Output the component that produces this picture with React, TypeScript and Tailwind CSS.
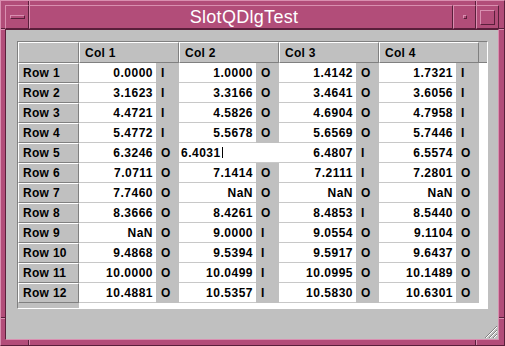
import React from "react";

type Cell = [string, string];

const rows: (Cell | null)[][] = [
  [["0.0000", "I"], ["1.0000", "O"], ["1.4142", "O"], ["1.7321", "I"]],
  [["3.1623", "I"], ["3.3166", "O"], ["3.4641", "O"], ["3.6056", "I"]],
  [["4.4721", "I"], ["4.5826", "O"], ["4.6904", "O"], ["4.7958", "I"]],
  [["5.4772", "I"], ["5.5678", "O"], ["5.6569", "O"], ["5.7446", "I"]],
  [["6.3246", "O"], null, ["6.4807", "I"], ["6.5574", "O"]],
  [["7.0711", "O"], ["7.1414", "O"], ["7.2111", "I"], ["7.2801", "O"]],
  [["7.7460", "O"], ["NaN", "O"], ["NaN", "O"], ["NaN", "O"]],
  [["8.3666", "O"], ["8.4261", "O"], ["8.4853", "I"], ["8.5440", "O"]],
  [["NaN", "O"], ["9.0000", "I"], ["9.0554", "O"], ["9.1104", "O"]],
  [["9.4868", "O"], ["9.5394", "I"], ["9.5917", "O"], ["9.6437", "O"]],
  [["10.0000", "O"], ["10.0499", "I"], ["10.0995", "O"], ["10.1489", "O"]],
  [["10.4881", "O"], ["10.5357", "I"], ["10.5830", "O"], ["10.6301", "O"]],
];

const raisedPink =
  "border-t border-l border-b border-r border-t-[#d98fb0] border-l-[#d98fb0] border-b-[#5a1f3b] border-r-[#5a1f3b]";

function HeaderCell({ label, w }: { label: string; w: string }) {
  return (
    <div
      className={`${w} h-[21px] shrink-0 bg-[#c0c0c0] border-t border-l border-t-white border-l-white border-b border-r border-b-[#808080] border-r-[#808080] pl-[5px] flex items-center text-[12px] font-bold tracking-[0.3px] text-black leading-none`}
    >
      {label}
    </div>
  );
}

export default function App() {
  return (
    <div className="relative w-[505px] h-[346px] overflow-hidden bg-[#b24d79] border-t border-l border-t-[#d98fb0] border-l-[#d98fb0] border-b border-r border-b-[#5a1f3b] border-r-[#5a1f3b] pt-[4px] pl-[4px] pr-[5px] pb-[5px] flex flex-col font-['Liberation_Sans',Arial,sans-serif]">
      {/* Frame resize marks */}
      <div className="absolute left-[27px] top-0 w-[1px] h-[4px] bg-[#5a1f3b]" />
      <div className="absolute left-[28px] top-0 w-[1px] h-[4px] bg-[#d98fb0]" />
      <div className="absolute left-[474px] top-0 w-[1px] h-[4px] bg-[#5a1f3b]" />
      <div className="absolute left-[475px] top-0 w-[1px] h-[4px] bg-[#d98fb0]" />
      <div className="absolute left-[27px] bottom-0 w-[1px] h-[5px] bg-[#5a1f3b]" />
      <div className="absolute left-[28px] bottom-0 w-[1px] h-[5px] bg-[#d98fb0]" />
      <div className="absolute left-[474px] bottom-0 w-[1px] h-[5px] bg-[#5a1f3b]" />
      <div className="absolute left-[475px] bottom-0 w-[1px] h-[5px] bg-[#d98fb0]" />
      <div className="absolute left-0 top-[27px] w-[4px] h-[1px] bg-[#5a1f3b]" />
      <div className="absolute left-0 top-[28px] w-[4px] h-[1px] bg-[#d98fb0]" />
      <div className="absolute left-0 top-[316px] w-[4px] h-[1px] bg-[#5a1f3b]" />
      <div className="absolute left-0 top-[317px] w-[4px] h-[1px] bg-[#d98fb0]" />
      <div className="absolute right-0 top-[27px] w-[5px] h-[1px] bg-[#5a1f3b]" />
      <div className="absolute right-0 top-[28px] w-[5px] h-[1px] bg-[#d98fb0]" />
      <div className="absolute right-0 top-[316px] w-[5px] h-[1px] bg-[#5a1f3b]" />
      <div className="absolute right-0 top-[317px] w-[5px] h-[1px] bg-[#d98fb0]" />

      {/* Title bar */}
      <div className="flex h-[24px] shrink-0">
        <div className={`w-[24px] h-full ${raisedPink} flex items-center justify-center`}>
          <div className={`w-[15px] h-[4px] ${raisedPink}`} />
        </div>
        <div className={`w-[424px] h-full ${raisedPink} flex items-center justify-center pl-[6px] text-white text-[18px] tracking-[0.3px] font-normal leading-none`}>
          SlotQDlgTest
        </div>
        <div className={`w-[23px] h-full ${raisedPink} flex items-center justify-center`}>
          <div className={`w-[4px] h-[4px] ${raisedPink}`} />
        </div>
        <div className={`w-[23px] h-full ${raisedPink} flex items-center justify-center`}>
          <div className={`w-[15px] h-[15px] ${raisedPink}`} />
        </div>
      </div>

      {/* Content */}
      <div className="relative flex-1 bg-[#c0c0c0] border-t border-l border-t-[#5a1f3b] border-l-[#5a1f3b] border-b border-r border-b-[#d98fb0] border-r-[#d98fb0] pt-[11px] pl-[11px]">
        <div className="w-[471px] h-[268px] border-t border-l border-t-[#808080] border-l-[#808080] border-b border-r border-b-white border-r-white flex flex-col overflow-hidden">
          {/* header row */}
          <div className="flex shrink-0">
            <HeaderCell label="" w="w-[61px]" />
            <HeaderCell label="Col 1" w="w-[100px]" />
            <HeaderCell label="Col 2" w="w-[100px]" />
            <HeaderCell label="Col 3" w="w-[100px]" />
            <HeaderCell label="Col 4" w="w-[100px]" />
            <div className="w-[8px] h-[21px] bg-[#c0c0c0] border-b border-b-[#808080]" />
          </div>
          {rows.map((r, i) => (
            <div key={i} className="flex h-[20px] shrink-0">
              <div className="w-[61px] h-[20px] shrink-0 bg-[#c0c0c0] border-t border-l border-t-white border-l-white border-b border-r border-b-[#808080] border-r-[#808080] pl-[4px] flex items-center text-[12px] font-bold tracking-[0.3px] text-black leading-none">
                Row {i + 1}
              </div>
              {r.map((c, j) =>
                c ? (
                  <div key={j} className="w-[100px] h-[20px] shrink-0 flex">
                    <div className="w-[77px] h-[20px] bg-white border-b border-b-[#c8c8c8] pr-[3px] flex items-center justify-end text-[12px] font-bold tracking-[0.5px] text-black leading-none">
                      {c[0]}
                    </div>
                    <div className="w-[23px] h-[20px] bg-[#c0c0c0] pl-[5px] flex items-center text-[12px] font-bold text-black leading-none">
                      {c[1]}
                    </div>
                  </div>
                ) : (
                  <div key={j} className="w-[100px] h-[20px] shrink-0 bg-white border-b border-b-[#c8c8c8] pl-[2px] flex items-center text-[12px] font-bold tracking-[0.5px] text-black leading-none">
                    6.4031
                    <span className="inline-block w-[1px] h-[11px] bg-black ml-[1px]" />
                  </div>
                )
              )}
              <div className="w-[8px] h-[20px] bg-white" />
            </div>
          ))}
          <div className="flex flex-1">
            <div className="w-[61px] bg-[#c0c0c0]" />
            <div className="flex-1 bg-white" />
          </div>
        </div>
        {/* size grip */}
        <svg className="absolute right-[1px] bottom-[1px]" width="14" height="14" viewBox="0 0 14 14">
          <line x1="2" y1="14" x2="14" y2="2" stroke="#808080" strokeWidth="1" />
          <line x1="3" y1="14" x2="14" y2="3" stroke="#ffffff" strokeWidth="1" />
          <line x1="6" y1="14" x2="14" y2="6" stroke="#808080" strokeWidth="1" />
          <line x1="7" y1="14" x2="14" y2="7" stroke="#ffffff" strokeWidth="1" />
          <line x1="10" y1="14" x2="14" y2="10" stroke="#808080" strokeWidth="1" />
          <line x1="11" y1="14" x2="14" y2="11" stroke="#ffffff" strokeWidth="1" />
        </svg>
      </div>
    </div>
  );
}
